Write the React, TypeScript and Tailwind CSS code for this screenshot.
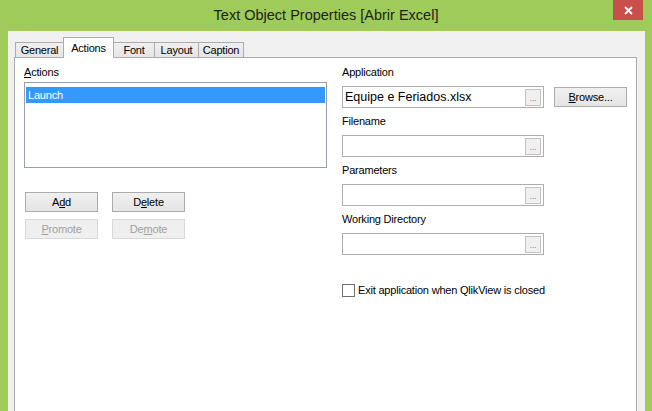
import React from "react";

const font = { fontFamily: '"Liberation Sans", Arial, sans-serif' };

function Tab({ label, w, selected }: { label: string; w: string; selected?: boolean }) {
  if (selected) {
    return (
      <div
        className={`${w} h-[21px] -mb-[1px] -ml-[1px] relative z-10 bg-white border border-b-0 border-[#acacac] flex items-start justify-center pt-[2px] text-[11px] tracking-[-0.2px] text-black`}
      >
        {label}
      </div>
    );
  }
  return (
    <div
      className={`${w} h-[15px] -ml-[1px] first:ml-0 bg-gradient-to-b from-[#f0f0f0] to-[#e5e5e5] border border-b-0 border-[#acacac] flex items-center justify-center text-[11px] tracking-[-0.2px] text-black leading-none`}
    >
      {label}
    </div>
  );
}

function Btn({ children, disabled }: { children: React.ReactNode; disabled?: boolean }) {
  return (
    <div
      className={`w-[73px] h-[20px] flex items-center justify-center text-[11px] tracking-[-0.2px] border ${
        disabled ? "bg-[#efefef] border-[#d9d9d9] text-[#a0a0a0]" : "bg-gradient-to-b from-[#f0f0f0] to-[#e5e5e5] border-[#acacac] text-black"
      }`}
    >
      {children}
    </div>
  );
}

function Field({ label, value, first }: { label: string; value?: string; first?: boolean }) {
  return (
    <div className={`flex flex-col ${first ? "" : "mt-[6px]"}`}>
      <div className="h-[15px] leading-[15px] text-[11px] tracking-[-0.2px] text-black">{label}</div>
      <div className="mt-[6px] flex items-center gap-[10px]">
        <div className="w-[202px] h-[22px] border border-[#abadb3] bg-white flex items-center pl-[2px] pr-[2px]">
          <div className="flex-1 text-[12.5px] text-black leading-none whitespace-nowrap">{value ?? ""}</div>
          <div className="w-[16px] h-[17px] bg-[#f0f0f0] border border-[#c2c2c2] flex items-end justify-center pb-[2px] text-[8px] leading-none text-[#555]">
            ...
          </div>
        </div>
        {first && (
          <Btn>
            <span>
              <u>B</u>rowse...
            </span>
          </Btn>
        )}
      </div>
    </div>
  );
}

export default function App() {
  return (
    <div className="w-[652px] h-[411px] bg-[#9fcb5b] flex flex-col overflow-hidden" style={font}>
      <div className="h-[31px] relative flex items-center justify-center shrink-0">
        <div className="text-[14.5px] text-[#1c2414] pt-[1px]">Text Object Properties [Abrir Excel]</div>
        <div className="absolute top-0 right-[9px] w-[30px] h-[20px] bg-[#c9504a] flex items-center justify-center">
          <svg width="9" height="9" viewBox="0 0 9 9">
            <path d="M1 1 L8 8 M8 1 L1 8" stroke="white" strokeWidth="1.8" />
          </svg>
        </div>
      </div>
      <div className="flex-1 ml-[8px] mr-[7px] bg-[#f0f0f0] pt-[6px] pl-[6px] pr-[8px] flex flex-col">
        <div className="h-[20px] flex items-end pl-[1px] shrink-0">
          <Tab label="General" w="w-[49px]" />
          <Tab label="Actions" w="w-[51px]" selected />
          <Tab label="Font" w="w-[42px]" />
          <Tab label="Layout" w="w-[45px]" />
          <Tab label="Caption" w="w-[46px]" />
        </div>
        <div className="flex-1 bg-white border border-b-0 border-[#acacac] pt-[7px] pl-[9px] flex gap-[15px]">
          <div className="w-[303px] flex flex-col">
            <div className="h-[15px] leading-[15px] text-[11px] tracking-[-0.2px] text-black">
              <u>A</u>ctions
            </div>
            <div className="mt-[2px] h-[86px] border border-[#9a9ea6] bg-white px-[1px] pt-[4px]">
              <div className="h-[16px] bg-[#3399ff] text-white text-[11px] tracking-[-0.2px] leading-[16px] pl-[2px]">
                Launch
              </div>
            </div>
            <div className="mt-[24px] flex gap-[14px] pl-[1px]">
              <Btn>
                <span>
                  A<u>d</u>d
                </span>
              </Btn>
              <Btn>
                <span>
                  D<u>e</u>lete
                </span>
              </Btn>
            </div>
            <div className="mt-[7px] flex gap-[14px] pl-[1px]">
              <Btn disabled>
                <span>
                  <u>P</u>romote
                </span>
              </Btn>
              <Btn disabled>
                <span>
                  De<u>m</u>ote
                </span>
              </Btn>
            </div>
          </div>
          <div className="flex flex-col">
            <Field label="Application" value="Equipe e Feriados.xlsx" first />
            <Field label="Filename" />
            <Field label="Parameters" />
            <Field label="Working Directory" />
            <div className="mt-[29px] flex items-center gap-[3px]">
              <div className="w-[13px] h-[13px] border border-[#707070] bg-white" />
              <div className="text-[11px] tracking-[-0.2px] text-black leading-none">
                Exit application when QlikView is closed
              </div>
            </div>
          </div>
        </div>
      </div>
    </div>
  );
}
